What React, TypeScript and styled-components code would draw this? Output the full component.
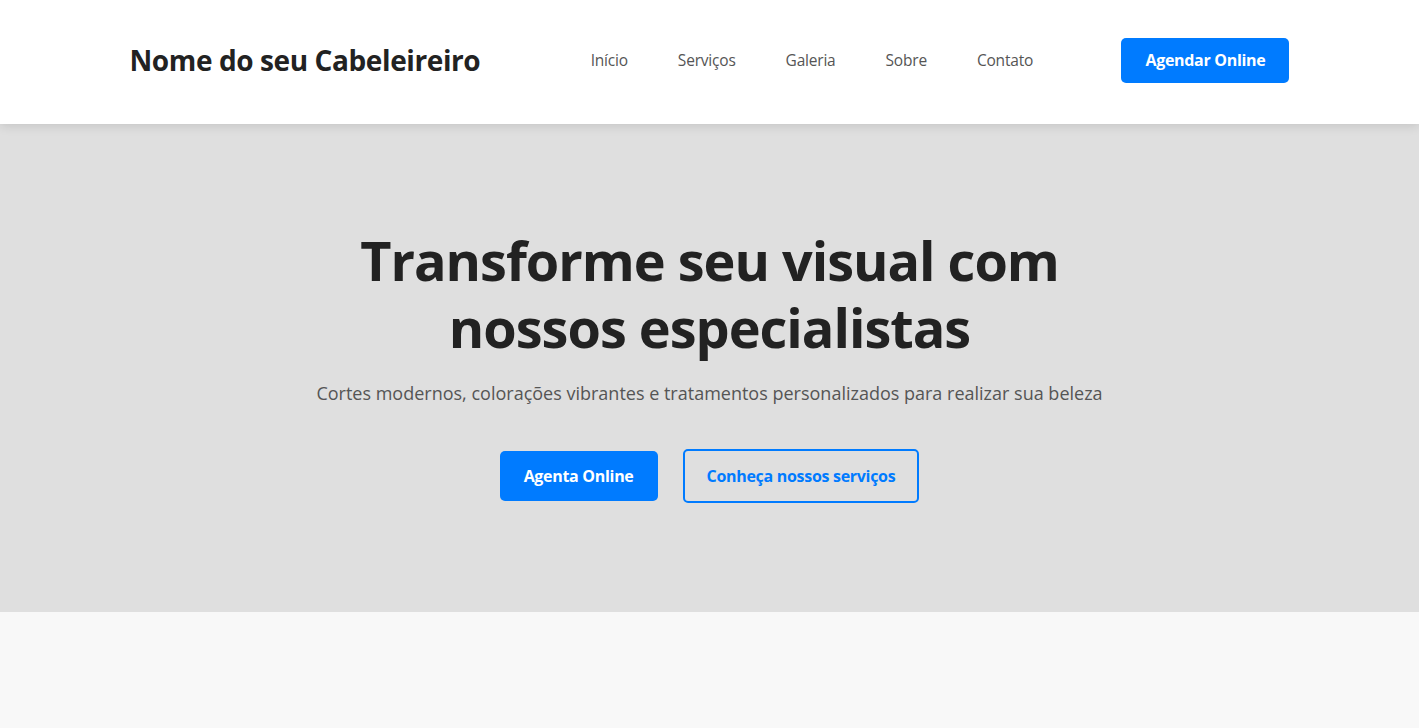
import React from "react";
import styled, { createGlobalStyle } from "styled-components";

const GlobalStyle = createGlobalStyle`
  * { box-sizing: border-box; margin: 0; padding: 0; }
  html, body { background: #f8f8f8; }
  body {
    font-family: "Open Sans", "Noto Sans", sans-serif;
    color: #222;
    min-height: 728px;
  }
`;

const Header = styled.header`
  background: #fff;
  box-shadow: 0 2px 10px rgba(0, 0, 0, 0.12);
  position: relative;
  z-index: 2;
`;

const Container = styled.div`
  max-width: 1200px;
  margin: 0 auto;
  padding: 0 20px;
`;

const HeaderInner = styled(Container)`
  height: 124px;
  padding-bottom: 4px;
  display: flex;
  align-items: center;
  justify-content: space-between;
`;

const Logo = styled.h1`
  font-size: 28px;
  font-weight: 700;
  color: #222;
  letter-spacing: -0.4px;
`;

const Nav = styled.nav`
  display: flex;
  gap: 50px;
  padding-left: 22px;
`;

const NavLink = styled.a`
  font-size: 15.5px;
  letter-spacing: -0.2px;
  color: #555;
  text-decoration: none;
`;

const Button = styled.a<{ $variant?: "solid" | "outline" }>`
  display: inline-block;
  font-size: 16px;
  font-weight: 700;
  letter-spacing: -0.3px;
  line-height: 21px;
  text-decoration: none;
  border-radius: 5px;
  padding: 12px 24px;
  color: ${(p) => (p.$variant === "outline" ? "#007bff" : "#fff")};
  background: ${(p) => (p.$variant === "outline" ? "transparent" : "#007bff")};
  border: ${(p) => (p.$variant === "outline" ? "2px solid #007bff" : "none")};
`;

const Hero = styled.section`
  background: #dfdfdf;
  height: 488px;
  display: flex;
  align-items: center;
  justify-content: center;
  text-align: center;
  padding-bottom: 6px;
`;

const HeroContent = styled.div`
  display: flex;
  flex-direction: column;
  align-items: center;
`;

const Title = styled.h2`
  font-size: 54px;
  font-weight: 700;
  letter-spacing: -1px;
  line-height: 67px;
  color: #222;
  max-width: 800px;
  margin-bottom: 20px;
`;

const Subtitle = styled.p`
  font-size: 18px;
  color: #555;
  margin-bottom: 44px;
`;

const Actions = styled.div`
  display: flex;
  align-items: center;
  gap: 25px;
`;

const HeroButton = styled(Button)`
  padding: ${(p) => (p.$variant === "outline" ? "14.5px 22px" : "14.5px 24px")};
`;

const Below = styled.section`
  background: #f8f8f8;
  height: 116px;
`;

export default function App() {
  return (
    <>
      <GlobalStyle />
      <Header>
        <HeaderInner>
          <Logo>Nome do seu Cabeleireiro</Logo>
          <Nav>
            <NavLink href="#">Início</NavLink>
            <NavLink href="#">Serviços</NavLink>
            <NavLink href="#">Galeria</NavLink>
            <NavLink href="#">Sobre</NavLink>
            <NavLink href="#">Contato</NavLink>
          </Nav>
          <Button href="#">Agendar Online</Button>
        </HeaderInner>
      </Header>
      <Hero>
        <HeroContent>
          <Title>Transforme seu visual com nossos especialistas</Title>
          <Subtitle>
            Cortes modernos, colorações vibrantes e tratamentos personalizados para realizar sua beleza
          </Subtitle>
          <Actions>
            <HeroButton href="#">Agenta Online</HeroButton>
            <HeroButton href="#" $variant="outline">
              Conheça nossos serviços
            </HeroButton>
          </Actions>
        </HeroContent>
      </Hero>
      <Below />
    </>
  );
}
